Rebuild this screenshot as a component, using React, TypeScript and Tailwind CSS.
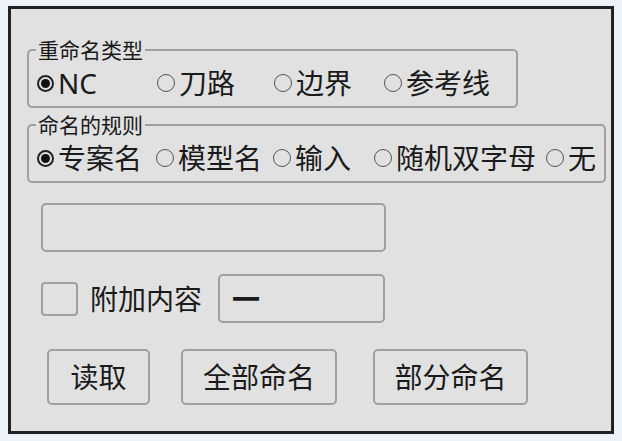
import React, { useState } from "react";

type Opt = { label: string; w: string };

const typeOpts: Opt[] = [
  { label: "NC", w: "w-[120px]" },
  { label: "刀路", w: "w-[117px]" },
  { label: "边界", w: "w-[110px]" },
  { label: "参考线", w: "w-auto" },
];

const ruleOpts: Opt[] = [
  { label: "专案名", w: "w-[119px]" },
  { label: "模型名", w: "w-[117px]" },
  { label: "输入", w: "w-[101px]" },
  { label: "随机双字母", w: "w-[172px]" },
  { label: "无", w: "w-auto" },
];

function Radio({ on }: { on: boolean }) {
  return on ? (
    <span className="flex h-[17px] w-[17px] shrink-0 items-center justify-center rounded-full border-2 border-[#222]">
      <span className="h-[9px] w-[9px] rounded-full bg-[#111]" />
    </span>
  ) : (
    <span className="h-[18px] w-[18px] shrink-0 rounded-full border border-[#555]" />
  );
}

function Group({
  title,
  opts,
  width,
}: {
  title: string;
  opts: Opt[];
  width: string;
}) {
  const [sel, setSel] = useState(0);
  return (
    <fieldset
      className={`${width} rounded-[5px] border-2 border-[#a0a0a0] pl-[7px] pr-2 pb-[2px]`}
    >
      <legend className="px-[2px] text-[21px] leading-[24px]">{title}</legend>
      <div className="flex h-[42px] items-center pl-[1px]">
        {opts.map((o, i) => (
          <label
            key={o.label}
            onClick={() => setSel(i)}
            className={`${o.w} flex cursor-default items-center gap-[4px] text-[28px] leading-none`}
          >
            <Radio on={sel === i} />
            <span>{o.label}</span>
          </label>
        ))}
      </div>
    </fieldset>
  );
}

export default function App() {
  return (
    <div className="min-h-[441px] bg-[#eef3f9] pt-[6px] pl-[8px] font-['Noto_Sans','Noto_Sans_CJK_SC',sans-serif] text-[#1a1a1a]">
      <div className="h-[428px] w-[606px] border-[3px] border-[#222] bg-[#e1e1e1] pt-[29px] pl-[16px]">
        <Group title="重命名类型" opts={typeOpts} width="w-[491px]" />
        <div className="h-[5px]" />
        <Group title="命名的规则" opts={ruleOpts} width="w-[578px]" />

        <div className="mt-[20px] ml-[14px] h-[49px] w-[345px] rounded-[5px] border-2 border-[#a0a0a0]" />

        <div className="mt-[22px] ml-[14px] flex items-center">
          <div className="h-[34px] w-[37px] rounded-[4px] border-2 border-[#a0a0a0]" />
          <span className="ml-[12px] text-[28px] leading-none">附加内容</span>
          <div className="ml-[16px] flex h-[49px] w-[167px] items-center rounded-[5px] border-2 border-[#a0a0a0] pl-[12px] text-[28px] font-bold">
            一
          </div>
        </div>

        <div className="mt-[26px] ml-[20px] flex gap-[31px]">
          <button className="h-[56px] w-[103px] rounded-[5px] border-2 border-[#a0a0a0] text-[28px]">
            读取
          </button>
          <button className="h-[56px] w-[156px] rounded-[5px] border-2 border-[#a0a0a0] text-[28px]">
            全部命名
          </button>
          <button className="ml-[5px] h-[56px] w-[155px] rounded-[5px] border-2 border-[#a0a0a0] text-[28px]">
            部分命名
          </button>
        </div>
      </div>
    </div>
  );
}
